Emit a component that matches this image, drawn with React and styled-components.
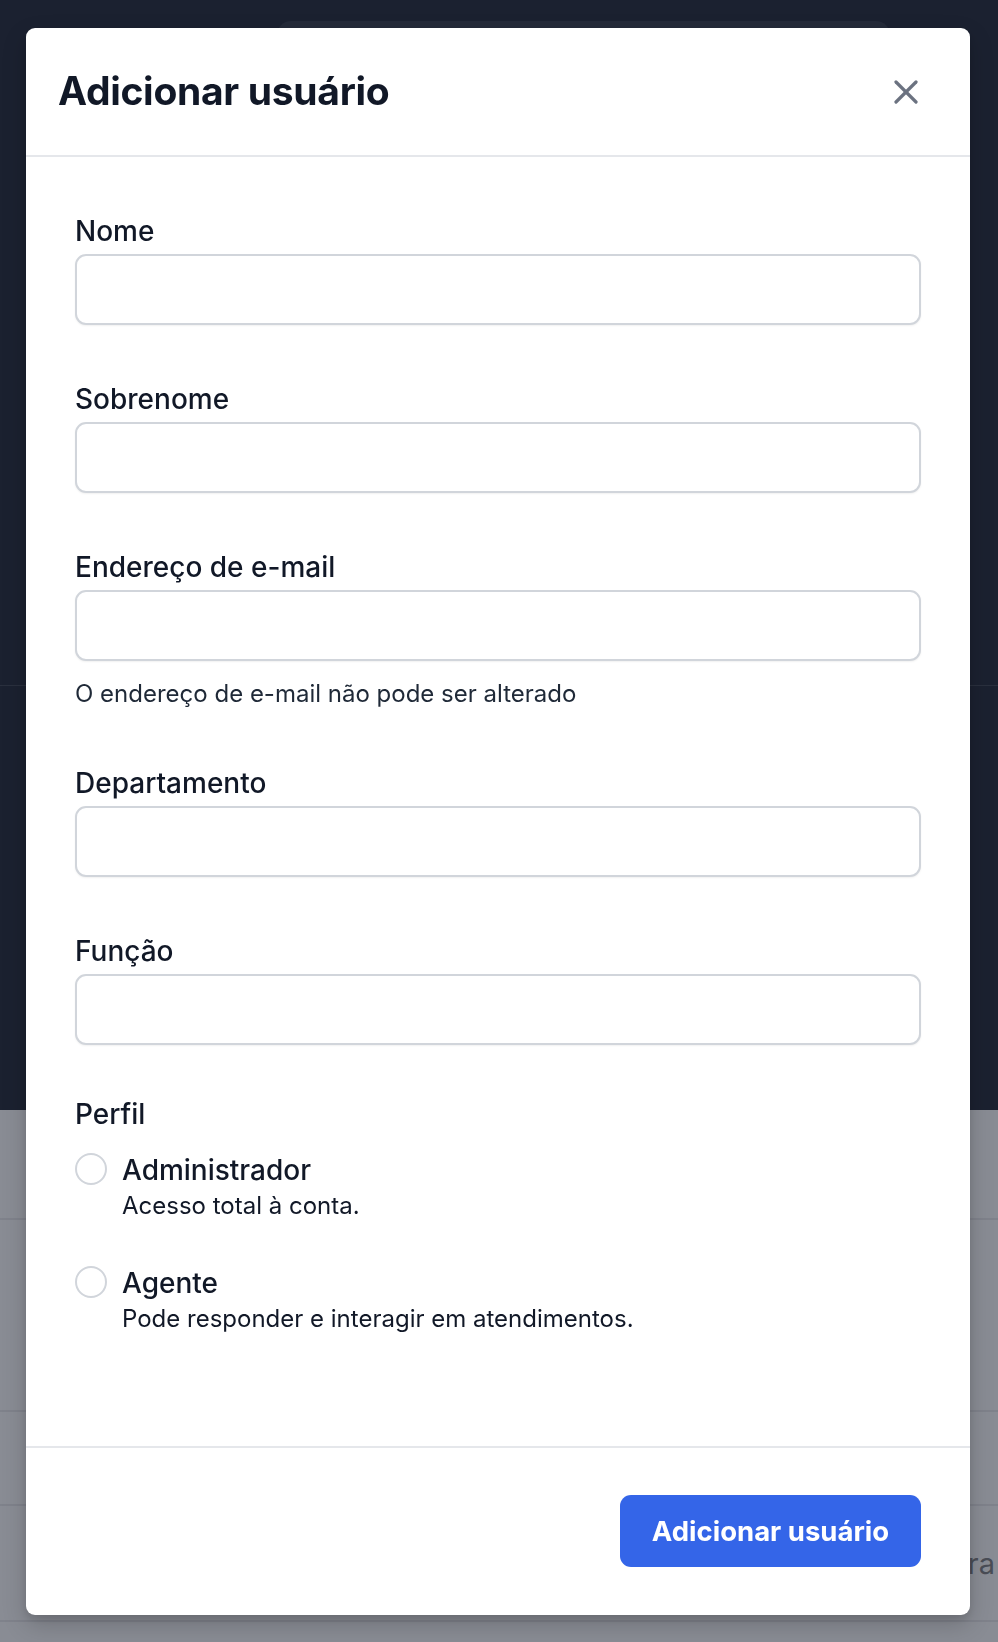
import React from "react";
import styled, { createGlobalStyle } from "styled-components";

const GlobalStyle = createGlobalStyle`
  html, body {
    margin: 0;
    padding: 0;
    background: #898c94;
  }
  body {
    font-family: Inter, "Noto Sans", sans-serif;
    -webkit-font-smoothing: antialiased;
  }
  * { box-sizing: border-box; }
`;

const Page = styled.div`
  width: 998px;
  min-height: 1642px;
  display: flex;
  flex-direction: column;
`;

const DarkTop = styled.div`
  height: 1110px;
  background: #1b2130;
  padding-top: 21px;
  display: flex;
  flex-direction: column;
`;

const TopPanel = styled.div`
  margin-left: 277px;
  width: 613px;
  height: 120px;
  border-radius: 14px;
  background: #242a39;
`;

const DarkRule = styled.div`
  margin-top: 544px;
  height: 1px;
  background: #2a303e;
`;

const GreyArea = styled.div`
  flex: 1;
  background: #898c94;
  display: flex;
  flex-direction: column;
`;

const GreyRow = styled.div`
  height: ${p => p.h}px;
  border-bottom: 2px solid #7f828b;
  display: flex;
  align-items: center;
  justify-content: flex-end;
  padding: 0 3px 0 0;
  color: #4a4d56;
  font-size: 29px;
  line-height: 1;
  overflow: hidden;
`;

const Overlay = styled.div`
  position: fixed;
  inset: 0;
  display: flex;
  align-items: flex-start;
  padding: 28px 0 0 26px;
`;

const Modal = styled.div`
  width: 944px;
  background: #fff;
  border-radius: 9px;
  box-shadow: 0 10px 24px rgba(0, 0, 0, 0.18), 0 4px 8px rgba(0, 0, 0, 0.1);
  display: flex;
  flex-direction: column;
  overflow: hidden;
`;

const Header = styled.div`
  height: 129px;
  display: flex;
  align-items: center;
  justify-content: space-between;
  padding: 0 52px 0 32px;
  border-bottom: 2px solid #e5e7eb;
`;

const Title = styled.h2`
  margin: 0;
  font-size: 39px;
  font-weight: 700;
  color: #111827;
  letter-spacing: -0.3px;
  line-height: 1.2;
`;

const CloseButton = styled.button`
  border: 0;
  background: transparent;
  padding: 0;
  width: 24px;
  height: 24px;
  display: flex;
  cursor: pointer;
  color: #6b7280;
`;

const Body = styled.div`
  padding: 54px 49px 110px;
  display: flex;
  flex-direction: column;
`;

const Field = styled.div`
  display: flex;
  flex-direction: column;
  margin-bottom: ${p => p.gap}px;
`;

const Label = styled.label`
  font-size: 28px;
  line-height: 40px;
  font-weight: 500;
  color: #111827;
  margin-bottom: 3px;
`;

const Input = styled.input`
  height: 71px;
  width: 100%;
  border: 2px solid #d1d5db;
  border-radius: 11px;
  background: #fff;
  box-shadow: 0 1px 2px rgba(0, 0, 0, 0.06);
  padding: 0 18px;
  font-family: inherit;
  font-size: 26px;
  outline: none;
`;

const Help = styled.p`
  margin: 16px 0 0;
  font-size: 24px;
  line-height: 33px;
  color: #1f2937;
`;

const Options = styled.div`
  display: flex;
  flex-direction: column;
  gap: 42px;
  margin-top: 15px;
`;

const Option = styled.label`
  display: flex;
  align-items: flex-start;
  gap: 15px;
  cursor: pointer;
`;

const Radio = styled.input.attrs({ type: "radio" })`
  appearance: none;
  margin: 1px 0 0;
  width: 32px;
  height: 32px;
  flex: none;
  border-radius: 50%;
  border: 2px solid #d1d5db;
  background: #fff;
`;

const OptionText = styled.div`
  display: flex;
  flex-direction: column;
`;

const OptionTitle = styled.span`
  font-size: 28px;
  line-height: 36px;
  font-weight: 500;
  color: #111827;
`;

const OptionDesc = styled.span`
  font-size: 24px;
  line-height: 35px;
  color: #111827;
`;

const Footer = styled.div`
  border-top: 2px solid #e5e7eb;
  padding: 47px 49px 48px;
  display: flex;
  justify-content: flex-end;
`;

const PrimaryButton = styled.button`
  width: 301px;
  height: 72px;
  border: 0;
  border-radius: 11px;
  background: #3465e8;
  color: #fff;
  font-family: inherit;
  font-size: 27.5px;
  font-weight: 700;
  cursor: pointer;
`;

const fields = [
  { id: "nome", label: "Nome", gap: 54 },
  { id: "sobrenome", label: "Sobrenome", gap: 54 },
  { id: "email", label: "Endereço de e-mail", help: "O endereço de e-mail não pode ser alterado", gap: 53 },
  { id: "departamento", label: "Departamento", gap: 54 },
  { id: "funcao", label: "Função", gap: 49 },
];

const roles = [
  { id: "admin", title: "Administrador", desc: "Acesso total à conta." },
  { id: "agent", title: "Agente", desc: "Pode responder e interagir em atendimentos." },
];

export default function App() {
  return (
    <>
      <GlobalStyle />
      <Page>
        <DarkTop>
          <TopPanel />
          <DarkRule />
        </DarkTop>
        <GreyArea>
          <GreyRow h={110} />
          <GreyRow h={192} />
          <GreyRow h={94} />
          <GreyRow h={116}>ra</GreyRow>
        </GreyArea>
      </Page>

      <Overlay>
        <Modal>
          <Header>
            <Title>Adicionar usuário</Title>
            <CloseButton aria-label="Fechar">
              <svg width="24" height="24" viewBox="0 0 24 24" fill="none" stroke="currentColor" strokeWidth="3.2" strokeLinecap="round">
                <line x1="2" y1="2" x2="22" y2="22" />
                <line x1="22" y1="2" x2="2" y2="22" />
              </svg>
            </CloseButton>
          </Header>

          <Body>
            {fields.map(f => (
              <Field key={f.id} gap={f.gap}>
                <Label htmlFor={f.id}>{f.label}</Label>
                <Input id={f.id} type={f.id === "email" ? "email" : "text"} />
                {f.help && <Help>{f.help}</Help>}
              </Field>
            ))}

            <Label>Perfil</Label>
            <Options>
              {roles.map(r => (
                <Option key={r.id}>
                  <Radio name="perfil" value={r.id} />
                  <OptionText>
                    <OptionTitle>{r.title}</OptionTitle>
                    <OptionDesc>{r.desc}</OptionDesc>
                  </OptionText>
                </Option>
              ))}
            </Options>
          </Body>

          <Footer>
            <PrimaryButton>Adicionar usuário</PrimaryButton>
          </Footer>
        </Modal>
      </Overlay>
    </>
  );
}
